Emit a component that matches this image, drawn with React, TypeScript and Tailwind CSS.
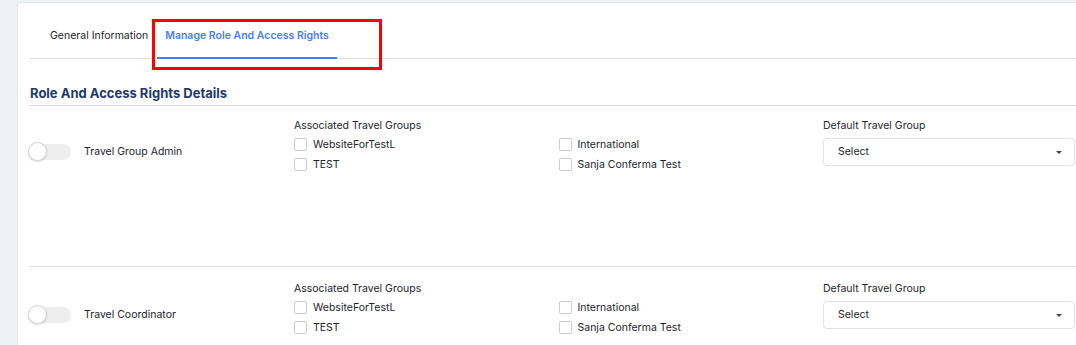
const groups = [
  ["WebsiteForTestL", "TEST"],
  ["International", "Sanja Conferma Test"],
];

const Toggle = () => (
  <div className="relative w-[42px] h-[16px] rounded-full bg-[#eeeeee]">
    <div className="absolute -left-px -top-[2px] w-[19px] h-[19px] rounded-full bg-white border border-[#d4d4d4] shadow-[0_1px_2px_rgba(0,0,0,0.15)]" />
  </div>
);

const Checkbox = ({ label }: { label: string }) => (
  <label className="flex items-center h-[13px] gap-[6px]">
    <span className="w-[13px] h-[13px] rounded-[2px] border border-[#c8ccd2] bg-white" />
    <span className="text-[10.5px] text-[#212529]">{label}</span>
  </label>
);

const RoleRow = ({ name, first }: { name: string; first?: boolean }) => (
  <div
    className={
      first
        ? "flex min-h-[161px] border-t border-[#dedede]"
        : "flex min-h-[161px] border-t border-[#dedede] pt-[2px]"
    }
  >
    <div className="w-[265px] pt-[32px]">
      <div className="h-[28px] flex items-center gap-[13px]">
        <Toggle />
        <span className="text-[10.5px] text-[#212529]">{name}</span>
      </div>
    </div>
    <div className="w-[529px] pt-[13px]">
      <div className="text-[10.5px] leading-[14px] text-[#212529]">
        Associated Travel Groups
      </div>
      <div className="grid grid-cols-2 mt-[5px]">
        {groups.map((col, i) => (
          <div key={i} className="flex flex-col gap-[7px]">
            {col.map((g) => (
              <Checkbox key={g} label={g} />
            ))}
          </div>
        ))}
      </div>
    </div>
    <div className="w-[252px] pt-[13px]">
      <div className="text-[10.5px] leading-[14px] text-[#212529]">
        Default Travel Group
      </div>
      <div className="mt-[5px] h-[28px] flex items-center justify-between rounded-[4px] border border-[#dfe4ec] bg-white pl-[14px] pr-[12px]">
        <span className="text-[10.5px] text-[#212529]">Select</span>
        <span className="w-0 h-0 border-l-[3px] border-r-[3px] border-t-[3px] border-l-transparent border-r-transparent border-t-[#444]" />
      </div>
    </div>
  </div>
);

export default function App() {
  return (
    <div className="w-[1076px] h-[345px] overflow-hidden bg-[#eef1f5] pt-[2px] font-['Inter',sans-serif]">
      <div className="relative ml-[17px] w-[1080px] h-[400px] bg-white rounded-tl-[4px] border-t border-l border-[#e3e6ea] pl-[11px]">
        <div className="w-[1047px]">
          <div className="flex border-b border-[#dcdce0] pl-[13px]">
            <button className="px-2 pt-[26px] pb-[14px] leading-[14px] text-[10.5px] text-[#212529] -mb-px border-b-2 border-transparent">
              General Information
            </button>
            <button className="ml-px px-2 pt-[26px] pb-[14px] leading-[14px] text-[10.5px] font-semibold text-[#4a7cf7] -mb-px border-b-2 border-[#3f7ff6]">
              Manage Role And Access Rights
            </button>
          </div>

          <h2 className="mt-[26px] pb-[4px] pl-px text-[13px] leading-[16px] font-bold text-[#1e3a6b]">
            Role And Access Rights Details
          </h2>

          <RoleRow name="Travel Group Admin" first />
          <RoleRow name="Travel Coordinator" />
        </div>

        <div className="absolute left-[134px] top-[16px] w-[230px] h-[51px] border-[3px] border-[#ff0000]" />
      </div>
    </div>
  );
}
